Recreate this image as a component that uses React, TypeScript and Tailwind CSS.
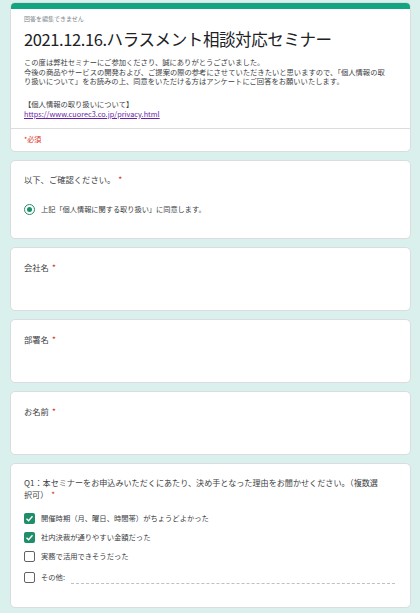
const font = {
  fontFamily: '"Noto Sans CJK JP", "Noto Sans", sans-serif',
};

function Req() {
  return <span className="text-[#d93025] ml-[3px]">*</span>;
}

function Card({ children, className = "" }: { children: React.ReactNode; className?: string }) {
  return (
    <div
      className={`w-[401px] ml-[10px] bg-white rounded-[5px] border border-[#dadce0] px-[13px] ${className}`}
    >
      {children}
    </div>
  );
}

function Check({ checked, label }: { checked: boolean; label: string }) {
  return (
    <div className="flex items-center h-[19px]">
      {checked ? (
        <span className="w-[11px] h-[11px] rounded-[2px] bg-[#1e8e68] flex items-center justify-center">
          <svg viewBox="0 0 12 12" className="w-[9px] h-[9px]">
            <path d="M2 6.2 L4.8 9 L10 3" stroke="white" strokeWidth="1.8" fill="none" />
          </svg>
        </span>
      ) : (
        <span className="w-[11px] h-[11px] rounded-[2px] border-[1.5px] border-[#5f6368]" />
      )}
      <span className="ml-[6px] text-[7.3px] text-[#3c4043]">{label}</span>
    </div>
  );
}

function TextQ({ label }: { label: string }) {
  return (
    <Card className="h-[64px] pt-[13px]">
      <div className="text-[8.3px] leading-[12px] text-[#3c4043]">
        {label}
        <Req />
      </div>
    </Card>
  );
}

export default function App() {
  return (
    <div className="w-[420px] h-[613px] bg-[#d9f0ec] pt-[2px] flex flex-col gap-[8px] overflow-hidden" style={font}>
      <div className="w-[401px] ml-[10px] bg-white rounded-[5px] border border-[#dadce0] overflow-hidden">
        <div className="h-[6px] bg-[#13a57f]" />
        <div className="px-[13px] pt-[5px]">
          <div className="text-[6px] leading-[9px] text-[#80868b]">回答を編集できません</div>
          <h1 className="mt-[5px] text-[16.5px] leading-[22px] tracking-[-0.4px] text-[#202124]">
            2021.12.16.ハラスメント相談対応セミナー
          </h1>
          <div className="mt-[8px] text-[7.3px] leading-[9.7px] text-[#3c4043] whitespace-nowrap">
            <p>この度は弊社セミナーにご参加くださり、誠にありがとうございました。</p>
            <p>今後の商品やサービスの開発および、ご提案の際の参考にさせていただきたいと思いますので、「個人情報の取</p>
            <p>り扱いについて」をお読みの上、同意をいただける方はアンケートにご回答をお願いいたします。</p>
            <p className="mt-[13px]">【個人情報の取り扱いについて】</p>
            <p className="text-[#681da8] underline">https://www.cuorec3.co.jp/privacy.html</p>
          </div>
        </div>
        <div className="mt-[8px] border-t border-[#dadce0] px-[13px] pt-[4px] h-[23px] text-[7px] leading-[12px] text-[#d93025]">
          *必須
        </div>
      </div>

      <Card className="h-[79px] pt-[12px]">
        <div className="text-[8.3px] leading-[12px] text-[#3c4043]">
          以下、ご確認ください。
          <Req />
        </div>
        <div className="mt-[19px] flex items-center">
          <span className="w-[11px] h-[11px] rounded-full border-[1.5px] border-[#1e8e68] flex items-center justify-center">
            <span className="w-[5px] h-[5px] rounded-full bg-[#1e8e68]" />
          </span>
          <span className="ml-[6px] text-[7.2px] text-[#3c4043]">
            上記「個人情報に関する取り扱い」に同意します。
          </span>
        </div>
      </Card>

      <TextQ label="会社名" />
      <TextQ label="部署名" />
      <TextQ label="お名前" />

      <Card className="h-[145px] pt-[13px]">
        <div className="text-[8.1px] leading-[12px] text-[#3c4043] whitespace-nowrap">
          <p>Q1：本セミナーをお申込みいただくにあたり、決め手となった理由をお聞かせください。（複数選</p>
          <p>
            択可）
            <Req />
          </p>
        </div>
        <div className="mt-[8px] flex flex-col">
          <Check checked label="開催時期（月、曜日、時間帯）がちょうどよかった" />
          <Check checked label="社内決裁が通りやすい金額だった" />
          <Check checked={false} label="実務で活用できそうだった" />
          <div className="flex items-center h-[19px] mt-[2px]">
            <span className="w-[11px] h-[11px] rounded-[2px] border-[1.5px] border-[#5f6368]" />
            <span className="ml-[6px] text-[7.3px] text-[#3c4043]">その他:</span>
            <span className="ml-[6px] flex-1 mr-[2px] mt-[12px] border-b border-dashed border-[#bdc1c6]" />
          </div>
        </div>
      </Card>
    </div>
  );
}
